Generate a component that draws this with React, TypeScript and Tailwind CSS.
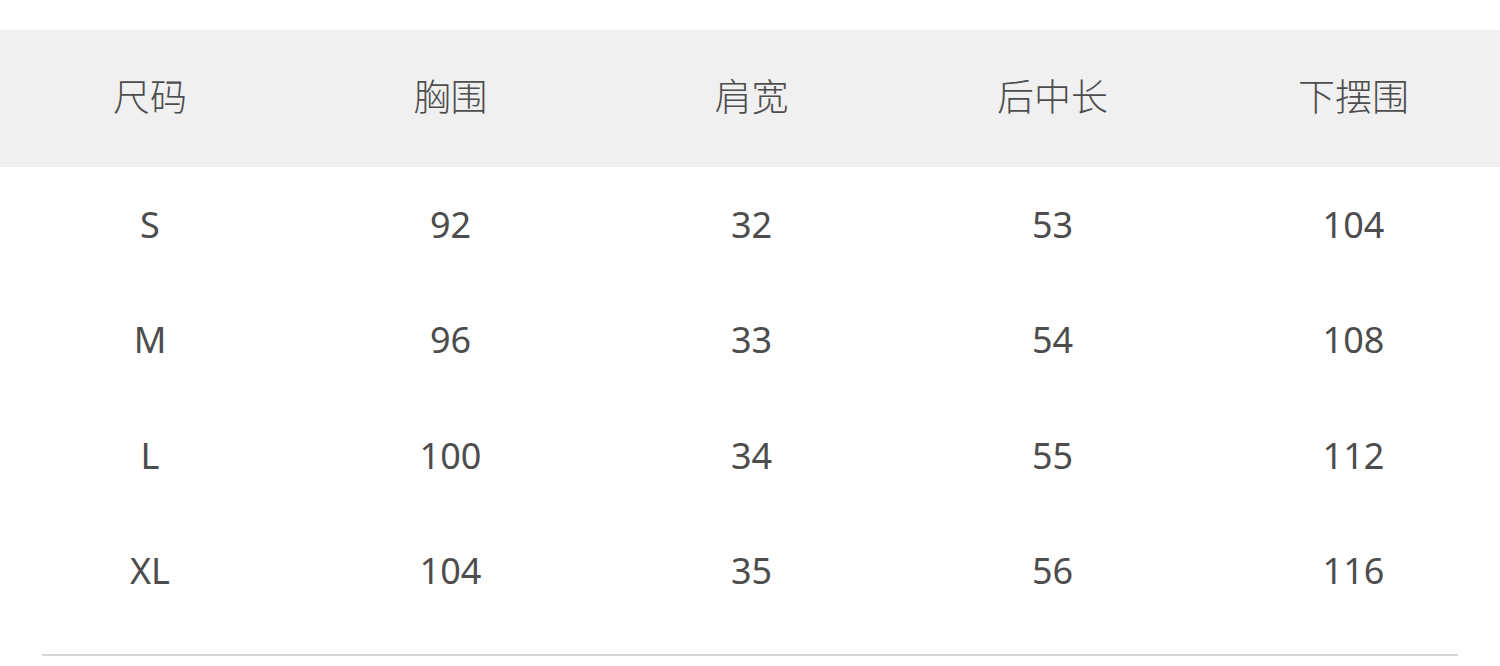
import React from 'react';

const headers = ['尺码', '胸围', '肩宽', '后中长', '下摆围'];

const rows: string[][] = [
  ['S', '92', '32', '53', '104'],
  ['M', '96', '33', '54', '108'],
  ['L', '100', '34', '55', '112'],
  ['XL', '104', '35', '56', '116'],
];

const cols = 'grid grid-cols-[300px_301px_301px_301px_301px]';

const App: React.FC = () => {
  return (
    <div
      className="w-[1500px] h-[666px] overflow-hidden bg-white pt-[30px] text-[#4d4d4d]"
      style={{ fontFamily: '"Noto Sans", "Noto Sans CJK SC", sans-serif' }}
    >
      <div className={`${cols} h-[137px] bg-[#f0f0f0] items-center`}>
        {headers.map((h) => (
          <div key={h} className="text-center text-[37px] font-light leading-none pb-[4px]">
            {h}
          </div>
        ))}
      </div>

      {rows.map((row) => (
        <div key={row[0]} className={`${cols} h-[115.5px] items-center`}>
          {row.map((cell, i) => (
            <div key={i} className="text-center text-[36px] leading-none">
              {cell}
            </div>
          ))}
        </div>
      ))}

      <div className="mx-[42px] mt-[25px] h-[2px] bg-[#d6d6d6]" />
    </div>
  );
};

export default App;
